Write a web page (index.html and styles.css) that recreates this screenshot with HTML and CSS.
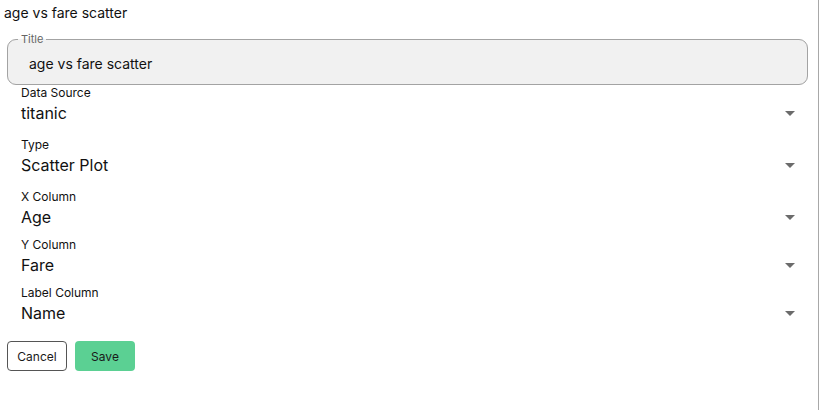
FILE: index.html
```html
<!DOCTYPE html>
<html lang="en">

<head>
  <meta charset="UTF-8" />
  <title>Chart editor</title>
  <link rel="stylesheet" href="styles.css">
</head>

<body>
  <div class="panel">
    <h2 class="chart-name">age vs fare scatter</h2>

    <fieldset class="title-box">
      <legend>Title</legend>
      <div class="title-value">age vs fare scatter</div>
    </fieldset>

    <div class="field tall">
      <div class="field-label">Data Source</div>
      <div class="field-value">titanic<span class="caret"></span></div>
    </div>
    <div class="field tall">
      <div class="field-label">Type</div>
      <div class="field-value">Scatter Plot<span class="caret"></span></div>
    </div>
    <div class="field">
      <div class="field-label">X Column</div>
      <div class="field-value">Age<span class="caret"></span></div>
    </div>
    <div class="field">
      <div class="field-label">Y Column</div>
      <div class="field-value">Fare<span class="caret"></span></div>
    </div>
    <div class="field">
      <div class="field-label">Label Column</div>
      <div class="field-value">Name<span class="caret"></span></div>
    </div>

    <div class="actions">
      <button class="btn cancel">Cancel</button>
      <button class="btn save">Save</button>
    </div>
  </div>
</body>
</html>
```

FILE: styles.css
```css
* {
  margin: 0;
  padding: 0;
  box-sizing: border-box;
  font-family: Inter, "Liberation Sans", sans-serif;
}

body {
  background: #ffffff;
  color: #111111;
}

.panel {
  width: 819px;
  height: 410px;
  border-right: 1px solid #a8a8a8;
  padding: 4px 10px 0 7px;
}

.chart-name {
  font-size: 14px;
  font-weight: 400;
  line-height: 17px;
  margin-left: -3px;
}

.title-box {
  margin-top: 13px;
  border: 1px solid #a3a3a3;
  border-radius: 9px;
  background: #f1f1f1;
  padding: 0 13px 0 21px;
  height: 51px;
}

.title-box legend {
  font-size: 11px;
  color: #666666;
  padding: 0 3px;
  margin-left: -11px;
  line-height: 11px;
}

.title-value {
  font-size: 14px;
  line-height: 17px;
  padding-top: 10px;
}

.field {
  padding-left: 14px;
  padding-right: 13px;
  height: 48px;
}

.field.tall {
  height: 52px;
}

.field-label {
  font-size: 12px;
  line-height: 15px;
}

.field-value {
  font-size: 16px;
  line-height: 20px;
  margin-top: 3px;
  display: flex;
  justify-content: space-between;
  align-items: center;
}

.caret {
  width: 0;
  height: 0;
  border-left: 5px solid transparent;
  border-right: 5px solid transparent;
  border-top: 5px solid #6b6b6b;
}

.actions {
  display: flex;
  gap: 8px;
  margin-top: 8px;
}

.btn {
  width: 60px;
  height: 30px;
  font-size: 12px;
  border-radius: 4px;
  cursor: pointer;
  color: #1a1a1a;
}

.cancel {
  background: #ffffff;
  border: 1px solid #555555;
}

.save {
  background: #5bd093;
  border: none;
}
```
